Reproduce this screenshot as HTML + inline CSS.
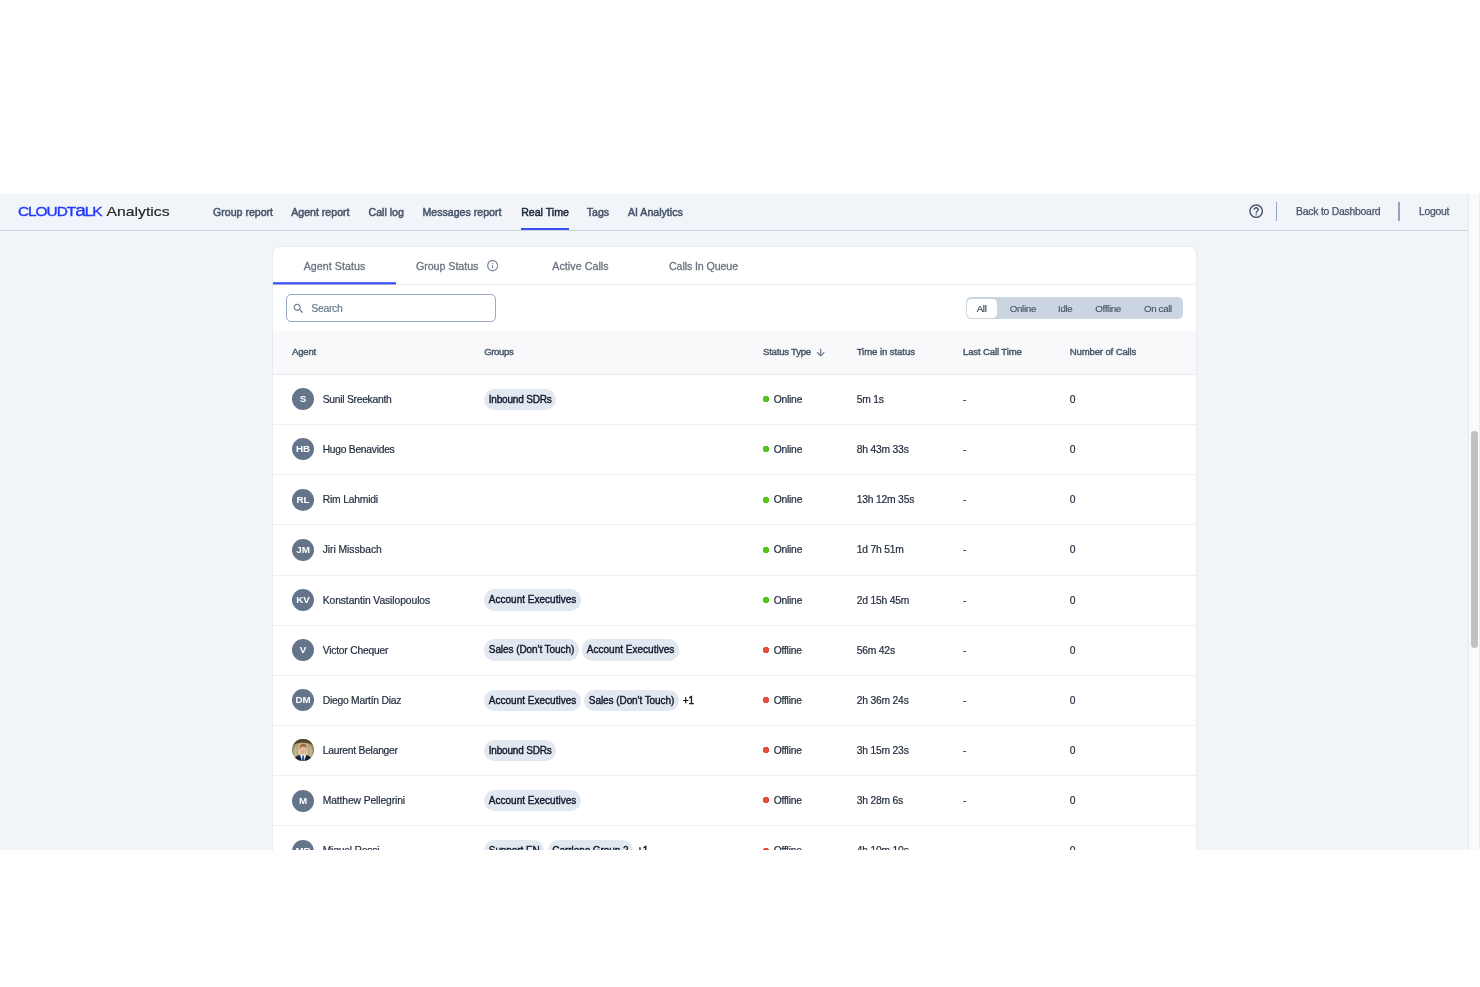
<!DOCTYPE html>
<html lang="en">
<head>
<meta charset="utf-8">
<title>CloudTalk Analytics - Real Time</title>
<style>
*{box-sizing:border-box;margin:0;padding:0}
html,body{width:1480px;height:987px;background:#fff;overflow:hidden}
body{position:relative;font-family:"Liberation Sans",Arial,sans-serif;color:#1e293b;-webkit-font-smoothing:antialiased}
#app{position:absolute;left:0;top:193.5px;width:1468.5px;height:656.5px;background:#f1f5f9;overflow:hidden;filter:opacity(1)}
#sb{position:absolute;left:1468.3px;top:193.5px;width:11.7px;height:656.5px;background:#fafafa;border-left:1px solid #e9e9e9;border-right:1px solid #ececec}
#sb i{position:absolute;left:2px;top:237.5px;width:6.8px;height:216.5px;border-radius:3.4px;background:#c1c1c1}
/* header */
#hd{position:absolute;left:0;top:0;width:100%;height:37px;border-bottom:1px solid #cbd5e1;background:#f1f5f9}
#logo{position:absolute;left:18.4px;top:9px;height:24px;white-space:nowrap;opacity:.999}
#logo svg{display:block}
.nav{position:absolute;top:0;left:0;height:37px;white-space:nowrap}
.nav a{display:block;position:absolute;top:0;height:36.5px;line-height:37px;font-size:10.6px;color:#475569;text-decoration:none;font-weight:400;-webkit-text-stroke:.5px #475569}
.nav a.on{color:#1e293b;-webkit-text-stroke:.5px #1e293b}
.nav a.on:after{content:"";position:absolute;left:0;right:0;bottom:0;height:2px;background:#3b4ff6}
.hr{position:absolute;top:-1px;height:37px;line-height:37px;font-size:10.4px;letter-spacing:-.24px;color:#475569;white-space:nowrap;-webkit-text-stroke:.25px #475569}
.vd{position:absolute;top:8.8px;width:1.3px;height:18.8px;background:#94a3bd}
/* card */
#card{position:absolute;left:273px;top:53.4px;width:923px;height:700px;background:#fff;border-radius:6px 6px 0 0;overflow:hidden;box-shadow:0 0 0 1px #e8ecf1}
#tabs{position:absolute;left:0;top:0;width:100%;height:38.1px;border-bottom:1px solid #ecedf0;display:flex}
.tab{width:123px;height:37.6px;display:flex;align-items:center;justify-content:center;font-size:10.67px;color:#6b7280;white-space:nowrap;position:relative;-webkit-text-stroke:.3px #6b7280;padding-top:1px;letter-spacing:.06px}
.tab.on:after{content:"";position:absolute;left:0;right:0;top:35.1px;height:3px;background:linear-gradient(to bottom,rgba(59,79,246,.8) 0,rgba(59,79,246,.8) 1px,#3b4ff6 1px,#3b4ff6 2px,rgba(59,79,246,.45) 2px,rgba(59,79,246,.45) 3px)}
.tab svg{margin-left:7.4px;margin-top:-.6px}
#search{position:absolute;left:13px;top:47.1px;width:209.8px;height:28.2px;border:1px solid #9aa8bf;border-radius:5px;background:#fff}
#search svg{position:absolute;left:5px;top:6.7px}
#search span{position:absolute;left:24.3px;top:1px;line-height:26.4px;font-size:10.4px;letter-spacing:-.3px;color:#64748b;-webkit-text-stroke:.15px #64748b}
#seg{position:absolute;left:693px;top:50.4px;width:217.4px;height:21.6px;border-radius:5px;background:#cbd5e1;font-size:9.7px;color:#475569}
#seg b{position:absolute;top:.5px;line-height:21.6px;font-weight:400;white-space:nowrap;letter-spacing:-.3px;-webkit-text-stroke:.15px #475569}
#seg .pill{position:absolute;left:1.4px;top:1.3px;width:29.3px;height:19px;border-radius:4.5px;background:#fff}
/* table */
#th{position:absolute;left:0;top:84.35px;width:100%;height:43.7px;background:#f9f9fb;border-bottom:1px solid #e9eaee;font-size:9.6px;color:#475569}
#th span{position:absolute;top:0;line-height:41.6px;white-space:nowrap;-webkit-text-stroke:.4px #475569}
#rows{position:absolute;left:0;top:128.05px;width:100%}
.r{position:relative;height:50.16px;border-bottom:1px solid #edeff2;font-size:9.33px;color:#1e293b;-webkit-text-stroke:.2px #1e293b}
.r>*{position:absolute;white-space:nowrap}
.av{-webkit-text-stroke:0;left:19px;top:13.35px;width:22px;height:22px;border-radius:50%;background:#64748b;color:#fff;font-size:9.8px;font-weight:700;text-align:center;line-height:21.4px}
.ph{background:none;border-radius:0}
.nm{left:49.7px;top:1px;line-height:48.7px;font-size:10.3px}
.gp{left:211.2px;top:13.65px;height:21.4px;display:flex;align-items:center}
.ch{height:21.4px;line-height:21.2px;padding:0 4.6px;border-radius:10.7px;background:#e2e8f0;color:#0f172a;font-weight:400;font-size:10px;-webkit-text-stroke:.38px #0f172a;margin-right:3.4px;letter-spacing:-.07px}
.more{font-weight:400;color:#0f172a;margin-left:.5px;font-size:10px;-webkit-text-stroke:.45px #0f172a}
.dot{left:489px;top:20.3px;width:8px;height:8px}
.g{background:radial-gradient(circle closest-side,#52c41a 74%,rgba(82,196,26,0) 84%)}.o{background:radial-gradient(circle closest-side,#e74c3c 74%,rgba(231,76,60,0) 84%)}
.st{left:500.7px;top:1px;line-height:48.7px;font-size:10.3px;letter-spacing:-.22px}
.tm{left:583.7px;top:1px;line-height:48.7px;font-size:10.3px;letter-spacing:-.19px}
.lc{left:690px;top:1px;line-height:48.7px;color:#334155;font-size:10.3px;-webkit-text-stroke:.15px #334155}
.nc{left:796.7px;top:1px;line-height:48.7px;font-size:10.3px}
</style>
</head>
<body>
<div id="app">
  <div id="hd">
    <div id="logo">
      <svg width="160" height="24" viewBox="0 0 160 24">
        <text x="0" y="13.15" font-family="Liberation Sans, Arial, sans-serif" font-size="13.3" letter-spacing="-0.9" fill="#2238ff" stroke="#2238ff" stroke-width="0.38" textLength="83.6" lengthAdjust="spacingAndGlyphs">CLOUDT<tspan font-size="16.6">a</tspan>LK</text>
        <text x="88.6" y="13.15" font-family="Liberation Sans, Arial, sans-serif" font-size="13.4" fill="#222" stroke="#222" stroke-width="0.15" textLength="63" lengthAdjust="spacingAndGlyphs">Analytics</text>
      </svg>
    </div>
    <div class="nav">
      <a style="left:213px">Group report</a><a style="left:291.2px">Agent report</a><a style="left:368.5px">Call log</a><a style="left:422.5px">Messages report</a><a class="on" style="left:521.2px">Real Time</a><a style="left:586.7px">Tags</a><a style="left:628px">AI Analytics</a>
    </div>
    <svg style="position:absolute;left:1248.35px;top:9.85px" width="16.4" height="16.4" viewBox="0 0 24 24" fill="#465469"><path d="M11 18h2v-2h-2v2zm1-16C6.48 2 2 6.48 2 12s4.48 10 10 10 10-4.480 10-10S17.520 2 12 2zm0 18c-4.410 0-8-3.590-8-8s3.590-8 8-8 8 3.590 8 8-3.590 8-8 8zm0-14c-2.210 0-4 1.790-4 4h2c0-1.100.9-2 2-2s2 .9 2 2c0 2-3 1.750-3 5h2c0-2.250 3-2.500 3-5 0-2.210-1.790-4-4-4z"/></svg>
    <div class="vd" style="left:1275.8px"></div>
    <div class="hr" style="left:1296.1px">Back to Dashboard</div>
    <div class="vd" style="left:1398.4px"></div>
    <div class="hr" style="left:1418.9px">Logout</div>
  </div>

  <div id="card">
    <div id="tabs">
      <div class="tab on">Agent Status</div>
      <div class="tab" style="letter-spacing:-.03px">Group Status<svg width="13.3" height="13.3" viewBox="0 0 24 24" fill="#7a8699"><path d="M11 7h2v2h-2zm0 4h2v6h-2zm1-9C6.48 2 2 6.48 2 12s4.480 10 10 10 10-4.480 10-10S17.520 2 12 2zm0 18c-4.410 0-8-3.590-8-8s3.590-8 8-8 8 3.590 8 8-3.590 8-8 8z"/></svg></div>
      <div class="tab">Active Calls</div>
      <div class="tab" style="letter-spacing:-.11px">Calls In Queue</div>
    </div>
    <div id="search">
      <svg width="13" height="13" viewBox="0 0 24 24" fill="#64748b"><path d="M15.5 14h-.79l-.28-.27C15.410 12.590 16 11.110 16 9.500 16 5.910 13.090 3 9.500 3S3 5.910 3 9.500 5.910 16 9.500 16c1.610 0 3.090-.59 4.230-1.570l.27.280v.79l5 4.990L20.490 19l-4.990-5zm-6 0C7.010 14 5 11.990 5 9.500S7.010 5 9.500 5 14 7.010 14 9.500 11.990 14 9.500 14z"/></svg>
      <span>Search</span>
    </div>
    <div id="seg">
      <div class="pill"></div>
      <b style="left:10.7px;color:#1e293b">All</b>
      <b style="left:43.8px">Online</b>
      <b style="left:92px">Idle</b>
      <b style="left:129.2px">Offline</b>
      <b style="left:177.9px">On call</b>
    </div>
    <div id="th">
      <span style="left:19px;letter-spacing:-0.22px">Agent</span>
      <span style="left:211.2px;letter-spacing:-0.37px">Groups</span>
      <span style="left:490px;letter-spacing:-0.23px">Status Type</span>
      <svg style="position:absolute;left:542.1px;top:15.4px" width="11.4" height="11.4" viewBox="0 0 24 24" fill="#64748b" stroke="#64748b" stroke-width=".5"><path d="M20 12l-1.410-1.410L13 16.170V4h-2v12.170l-5.580-5.590L4 12l8 8 8-8z"/></svg>
      <span style="left:583.7px;letter-spacing:-0.08px">Time in status</span>
      <span style="left:690px;letter-spacing:-0.15px">Last Call Time</span>
      <span style="left:796.7px;letter-spacing:-0.15px">Number of Calls</span>
    </div>
    <div id="rows">
      <div class="r"><div class="av">S</div><div class="nm" style="letter-spacing:-0.26px">Sunil Sreekanth</div><div class="gp"><span class="ch" style="letter-spacing:-.19px">Inbound SDRs</span></div><i class="dot g"></i><div class="st">Online</div><div class="tm">5m 1s</div><div class="lc">-</div><div class="nc">0</div></div>
      <div class="r"><div class="av">HB</div><div class="nm" style="letter-spacing:-0.27px">Hugo Benavides</div><i class="dot g"></i><div class="st">Online</div><div class="tm">8h 43m 33s</div><div class="lc">-</div><div class="nc">0</div></div>
      <div class="r"><div class="av">RL</div><div class="nm" style="letter-spacing:-0.175px">Rim Lahmidi</div><i class="dot g"></i><div class="st">Online</div><div class="tm">13h 12m 35s</div><div class="lc">-</div><div class="nc">0</div></div>
      <div class="r"><div class="av">JM</div><div class="nm" style="letter-spacing:-0.03px">Jiri Missbach</div><i class="dot g"></i><div class="st">Online</div><div class="tm">1d 7h 51m</div><div class="lc">-</div><div class="nc">0</div></div>
      <div class="r"><div class="av">KV</div><div class="nm" style="letter-spacing:-0.077px">Konstantin Vasilopoulos</div><div class="gp"><span class="ch" style="letter-spacing:.012px">Account Executives</span></div><i class="dot g"></i><div class="st">Online</div><div class="tm">2d 15h 45m</div><div class="lc">-</div><div class="nc">0</div></div>
      <div class="r"><div class="av">V</div><div class="nm" style="letter-spacing:-0.21px">Victor Chequer</div><div class="gp"><span class="ch">Sales (Don't Touch)</span><span class="ch" style="letter-spacing:.012px">Account Executives</span></div><i class="dot o"></i><div class="st">Offline</div><div class="tm">56m 42s</div><div class="lc">-</div><div class="nc">0</div></div>
      <div class="r"><div class="av">DM</div><div class="nm" style="letter-spacing:-0.235px">Diego Martín Diaz</div><div class="gp"><span class="ch" style="letter-spacing:.012px">Account Executives</span><span class="ch">Sales (Don't Touch)</span><span class="more">+1</span></div><i class="dot o"></i><div class="st">Offline</div><div class="tm">2h 36m 24s</div><div class="lc">-</div><div class="nc">0</div></div>
      <div class="r"><svg class="av ph" viewBox="0 0 22 22"><defs><clipPath id="cp"><circle cx="11" cy="11" r="11"/></clipPath><radialGradient id="bg" cx="50%" cy="58%" r="62%"><stop offset="0" stop-color="#ddd5bb"/><stop offset=".62" stop-color="#c2b48e"/><stop offset=".86" stop-color="#7d6e45"/><stop offset="1" stop-color="#40361b"/></radialGradient></defs><g clip-path="url(#cp)"><rect width="22" height="22" fill="url(#bg)"/><path d="M0 0h22v7C18.500 2.600 3.500 2.600 0 7z" fill="#3e3419" opacity=".75"/><path d="M5.200 6v11M16.800 6v11" stroke="#8d7f58" stroke-width="1.100" opacity=".55"/><path d="M1.500 22c.2-3.200 2.400-4.600 6.200-6l3.300-.6 3.300.6c3.800 1.400 6 2.800 6.200 6z" fill="#1a212e"/><path d="M8 15.700L9.800 22h2.600l1.800-6.300-3.100-.9z" fill="#e9eef6"/><path d="M10.300 16.600h1.500l.7 5.400H9.700z" fill="#2b4fa6"/><ellipse cx="11.050" cy="11" rx="3.250" ry="4.500" fill="#e4b892"/><path d="M7.700 10.200c-.5-3.600 1.200-5.400 3.500-5.400 2.400 0 3.900 1.800 3.300 5.300-.3-1.800-1-2.700-3.300-2.700-2.400 0-3 .9-3.500 2.800z" fill="#9c6b34"/><path d="M9.600 12.900c.9.500 2 .5 2.900 0" stroke="#b98668" stroke-width=".5" fill="none"/></g></svg><div class="nm" style="letter-spacing:-0.245px">Laurent Belanger</div><div class="gp"><span class="ch" style="letter-spacing:-.19px">Inbound SDRs</span></div><i class="dot o"></i><div class="st">Offline</div><div class="tm">3h 15m 23s</div><div class="lc">-</div><div class="nc">0</div></div>
      <div class="r"><div class="av">M</div><div class="nm" style="letter-spacing:-0.1px">Matthew Pellegrini</div><div class="gp"><span class="ch" style="letter-spacing:.012px">Account Executives</span></div><i class="dot o"></i><div class="st">Offline</div><div class="tm">3h 28m 6s</div><div class="lc">-</div><div class="nc">0</div></div>
      <div class="r"><div class="av">MR</div><div class="nm" style="letter-spacing:-0.2px">Miguel Rossi</div><div class="gp"><span class="ch">Support EN</span><span class="ch">Carrlene Group 2</span><span class="more">+1</span></div><i class="dot o"></i><div class="st">Offline</div><div class="tm">4h 10m 10s</div><div class="lc">-</div><div class="nc">0</div></div>
    </div>
  </div>
</div>
<div id="sb"><i></i></div>
</body>
</html>
